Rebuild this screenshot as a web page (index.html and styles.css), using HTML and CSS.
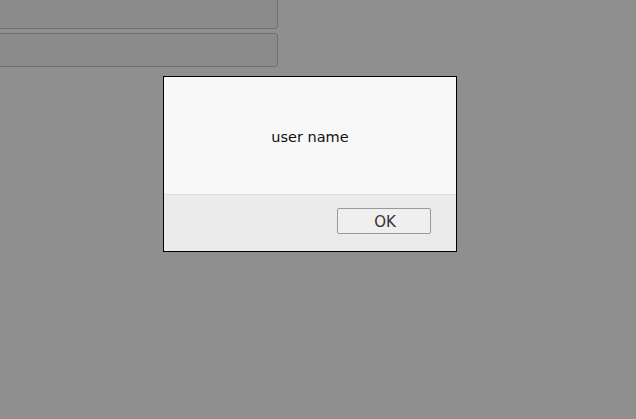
FILE: index.html
```html
<!DOCTYPE html>
<html>
<head>
<meta charset="utf-8">
<link rel="stylesheet" href="styles.css">
</head>
<body>
<div class="form">
  <div class="field first"></div>
  <div class="field"></div>
</div>
<div class="dialog">
  <div class="message">user name</div>
  <div class="footer">
    <button class="ok">OK</button>
  </div>
</div>
</body>
</html>
```

FILE: styles.css
```css
html, body {
  margin: 0;
  height: 100%;
}
body {
  background: #8f8f8f;
  font-family: "DejaVu Sans", sans-serif;
  overflow: hidden;
}
.form {
  display: flex;
  flex-direction: column;
  gap: 4px;
  margin-top: -5px;
  margin-left: -20px;
  width: 298px;
}
.field {
  height: 32px;
  border: 1px solid #6f6f6f;
  border-radius: 3px;
  background: #8b8b8b;
}
.dialog {
  position: absolute;
  left: 163px;
  top: 76px;
  width: 292px;
  border: 1px solid #000;
  background: #f8f8f8;
}
.message {
  height: 117px;
  display: flex;
  align-items: center;
  justify-content: center;
  font-size: 14.5px;
  color: #111;
  padding-top: 3px;
  box-sizing: border-box;
}
.footer {
  height: 57px;
  border-top: 1px solid #dcdcdc;
  background: #ebebeb;
  display: flex;
  justify-content: flex-end;
  align-items: flex-start;
  padding: 13px 25px 0 0;
  box-sizing: border-box;
}
.ok {
  width: 94px;
  height: 26px;
  border: 1px solid #9a9a9a;
  border-radius: 2px;
  background: #efefef;
  font-family: "DejaVu Sans", sans-serif;
  font-size: 15px;
  color: #333;
  padding: 2px 0 0 2px;
}
```
